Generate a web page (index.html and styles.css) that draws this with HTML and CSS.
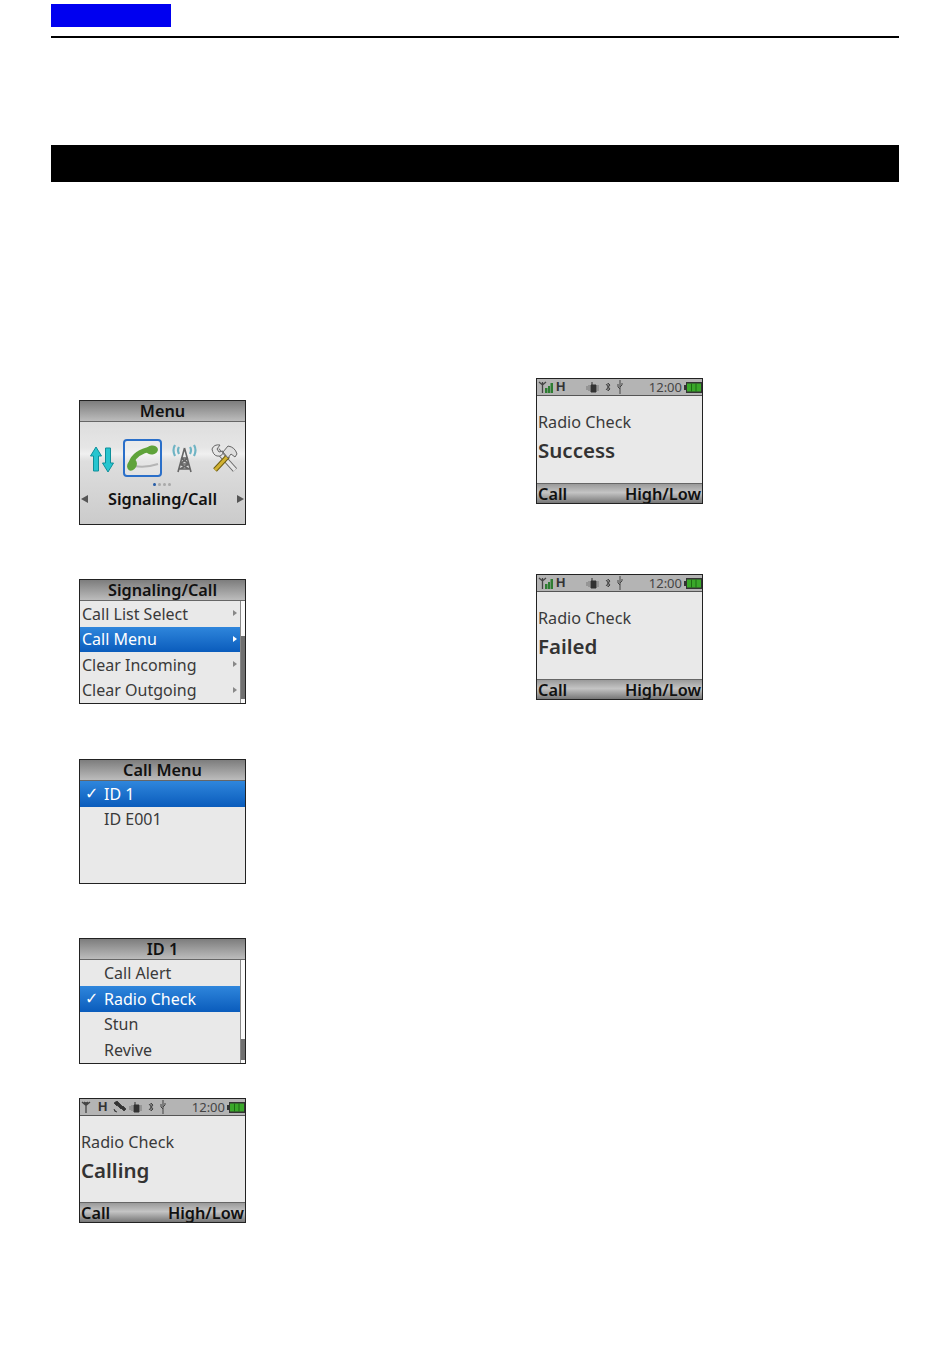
FILE: index.html
```html
<!DOCTYPE html>
<html>
<head>
<meta charset="UTF-8">
<title>Radio Check</title>
<link rel="stylesheet" href="styles.css">
</head>
<body>
<svg class="defs" width="0" height="0">
  <symbol id="ant" viewBox="0 0 10 12"><path d="M1 1l4 3.500 4-3.500M5 1v11M3 1l2 2 2-2" fill="none" stroke="#444" stroke-width="1.300"/></symbol>
  <symbol id="antbars" viewBox="0 0 15 12"><path d="M1 1l3.500 3 3.500-3M4.500 1v11" fill="none" stroke="#444" stroke-width="1.300"/><path d="M7 7h2.500v5H7zM10 5h2v7h-2zM12.500 2H15v10h-2.500z" fill="#2e7d32"/></symbol>
  <symbol id="sat" viewBox="0 0 13 12"><path d="M1 2l3-2 3 3-3 2zM5 5l2-2 3 3-2 2zM8 7l2-2 3 3-2 2zM1 8q0 3 3 3" fill="#333" stroke="#333" stroke-width=".8"/></symbol>
  <symbol id="vib" viewBox="0 0 14 12"><path d="M5 4h5v7H5zM6 1v3" fill="#333" stroke="#333"/><path d="M3 4v6M1 5v4M12 4v6" stroke="#777" fill="none"/></symbol>
  <symbol id="bt" viewBox="0 0 6 12"><path d="M1 3l4 5-2 2V2l2 2-4 5" fill="none" stroke="#444"/></symbol>
  <symbol id="usb" viewBox="0 0 6 14"><path d="M3 0v14M3 9L1 7V4M3 7l2-2V3" fill="none" stroke="#444"/></symbol>
  <symbol id="batt" viewBox="0 0 18 11"><path d="M2 0h16v11H2zM0 3h2v5H0z" fill="#333"/><path d="M3 1.500h14v8H3z" fill="#3aa82a"/><path d="M7.500 1.500v8M12 1.500v8" stroke="#1c6a14"/></symbol>
</svg>

<div class="page">
  <div class="tab"></div>
  <div class="rule"></div>
  <div class="band"></div>

  <div class="cols">
    <div class="col col-left">

      <div class="screen menu">
        <div class="title">Menu</div>
        <div class="icons">
          <svg class="ico ico-arrows" viewBox="0 0 24 27">
            <path d="M6 1l5.500 9H8.500v15h-5V10H.5z" fill="#27c5cf" stroke="#0e8f9a"/>
            <path d="M18 26l-5.500-9h3V2h5v15h3z" fill="#27c5cf" stroke="#0e8f9a"/>
          </svg>
          <div class="phone-box">
            <svg class="ico ico-phone" viewBox="0 0 33 30">
              <path d="M8 23q12 2 24-2" fill="none" stroke="#b5b5b5" stroke-width="2"/>
              <path d="M5 20Q9 9 25 6" fill="none" stroke="#5fa33a" stroke-width="5"/>
              <ellipse cx="6" cy="22" rx="4.500" ry="6" transform="rotate(30 6 22)" fill="#5fa33a"/>
              <ellipse cx="26" cy="7" rx="6" ry="4.500" transform="rotate(-10 26 7)" fill="#5fa33a"/>
            </svg>
          </div>
          <svg class="ico ico-tower" viewBox="0 0 27 32">
            <path d="M13.500 6L7 30M13.500 6L20 30M9 22h9M10 16h7M8 27h11M9 22l9 5M18 22l-9 5M10 16l8 6M17 16l-8 6" fill="none" stroke="#666" stroke-width="1.600"/>
            <path d="M4 3q-3 5 0 11M8 5q-2 3 0 7M23 3q3 5 0 11M19 5q2 3 0 7" fill="none" stroke="#6fb4c4" stroke-width="2.200"/>
          </svg>
          <svg class="ico ico-tools" viewBox="0 0 27 29">
            <path d="M6 6l18 20" stroke="#666" stroke-width="5.500" fill="none"/>
            <path d="M6 6l18 20" stroke="#e6e6e6" stroke-width="3.500" fill="none"/>
            <path d="M1 5q2-5 8-4L6 5l2 3 4-1q0 6-6 5Q2 11 1 5z" fill="#e6e6e6" stroke="#666"/>
            <path d="M4 26l13-14" stroke="#6d5c10" stroke-width="5" fill="none"/>
            <path d="M4 26l13-14" stroke="#d2b232" stroke-width="3" fill="none"/>
            <path d="M12 8l5-6q7 1 9 8l-2 3-4-3-3 4z" fill="#dedede" stroke="#666"/>
          </svg>
        </div>
        <div class="dots"><i class="on"></i><i></i><i></i><i></i></div>
        <div class="menu-label">
          <span class="tri-left"></span>
          <span>Signaling/Call</span>
          <span class="tri-right"></span>
        </div>
      </div>

      <div class="screen">
        <div class="title">Signaling/Call</div>
        <div class="body">
          <div class="rows">
            <div class="row">Call List Select<span class="more"></span></div>
            <div class="row sel">Call Menu<span class="more"></span></div>
            <div class="row">Clear Incoming<span class="more"></span></div>
            <div class="row">Clear Outgoing<span class="more"></span></div>
          </div>
          <div class="scroll"><div class="thumb thumb-a"></div></div>
        </div>
      </div>

      <div class="screen nudge">
        <div class="title">Call Menu</div>
        <div class="body">
          <div class="rows">
            <div class="row sel inset"><span class="check">✓</span>ID 1</div>
            <div class="row inset">ID E001</div>
          </div>
        </div>
      </div>

      <div class="screen tall">
        <div class="title">ID 1</div>
        <div class="body">
          <div class="rows">
            <div class="row inset">Call Alert</div>
            <div class="row sel inset"><span class="check">✓</span>Radio Check</div>
            <div class="row inset">Stun</div>
            <div class="row inset">Revive</div>
          </div>
          <div class="scroll"><div class="thumb thumb-b"></div></div>
        </div>
      </div>

      <div class="screen status-screen last">
        <div class="status">
          <svg class="s-ant"><use href="#ant"/></svg>
          <b class="s-h">H</b>
          <svg class="s-sat"><use href="#sat"/></svg>
          <svg class="s-vib"><use href="#vib"/></svg>
          <svg class="s-bt"><use href="#bt"/></svg>
          <svg class="s-usb"><use href="#usb"/></svg>
          <span class="time">12:00</span>
          <svg class="s-batt"><use href="#batt"/></svg>
        </div>
        <div class="msg">
          <div class="msg-small">Radio Check</div>
          <div class="msg-big">Calling</div>
        </div>
        <div class="soft"><span>Call</span><span>High/Low</span></div>
      </div>
    </div>

    <div class="col col-right">
      <div class="screen status-screen tall">
        <div class="status">
          <svg class="s-antbars"><use href="#antbars"/></svg>
          <b class="s-h h-bars">H</b>
          <svg class="s-vib vib-far"><use href="#vib"/></svg>
          <svg class="s-bt"><use href="#bt"/></svg>
          <svg class="s-usb"><use href="#usb"/></svg>
          <span class="time">12:00</span>
          <svg class="s-batt"><use href="#batt"/></svg>
        </div>
        <div class="msg">
          <div class="msg-small">Radio Check</div>
          <div class="msg-big">Success</div>
        </div>
        <div class="soft"><span>Call</span><span>High/Low</span></div>
      </div>

      <div class="screen status-screen tall">
        <div class="status">
          <svg class="s-antbars"><use href="#antbars"/></svg>
          <b class="s-h h-bars">H</b>
          <svg class="s-vib vib-far"><use href="#vib"/></svg>
          <svg class="s-bt"><use href="#bt"/></svg>
          <svg class="s-usb"><use href="#usb"/></svg>
          <span class="time">12:00</span>
          <svg class="s-batt"><use href="#batt"/></svg>
        </div>
        <div class="msg">
          <div class="msg-small">Radio Check</div>
          <div class="msg-big">Failed</div>
        </div>
        <div class="soft"><span>Call</span><span>High/Low</span></div>
      </div>
    </div>
  </div>
</div>
</body>
</html>
```

FILE: styles.css
```css
html, body { margin: 0; padding: 0; background: #fff; }
body { font-family: "Noto Sans", "Open Sans", sans-serif; color: #333; }
.defs { position: absolute; }
.page { width: 848px; margin-left: 51px; padding-top: 4px; }
.tab { width: 120px; height: 23px; background: #0000f0; }
.rule { height: 2px; margin-top: 9px; background: #000; }
.band { height: 37px; margin-top: 107px; background: #000; }

.cols { display: flex; margin-top: 196px; }
.col { display: flex; flex-direction: column; }
.col-left { width: 485px; padding: 22px 0 0 28px; box-sizing: border-box; gap: 54px; }
.col-right { gap: 70px; }
.nudge { margin-top: 1px; }
.last { margin-top: -20px; }

/* radio screens */
.screen { width: 165px; height: 123px; border: 1px solid #222; background: #e9e9e9; display: flex; flex-direction: column; overflow: hidden; font-size: 16px; }
.screen.tall { height: 124px; }
.title { height: 21px; line-height: 20px; flex: none; text-align: center; font-weight: 600; font-size: 16.300px; color: #111; background: linear-gradient(#7d7d7d, #bcbcbc); border-bottom: 1px solid #666; box-sizing: border-box; }

.body { flex: 1; display: flex; }
.rows { flex: 1; }
.row { height: 25.500px; line-height: 24px; padding-left: 2px; display: flex; align-items: center; position: relative; color: #3a3a3a; white-space: nowrap; }
.tall .row { height: 25.800px; }
.row.inset { padding-left: 24px; }
.row.sel { color: #fff; background: linear-gradient(#2f86dc, #0a5cbc); }
.check { position: absolute; left: 5px; font-family: "DejaVu Sans", sans-serif; font-size: 16px; font-weight: bold; }
.more { position: absolute; right: 3px; top: 9px; border-left: 4px solid #888; border-top: 3.500px solid transparent; border-bottom: 3.500px solid transparent; }
.row.sel .more { border-left-color: #fff; }

.scroll { width: 4px; background: #fafafa; border-left: 1px solid #888; display: flex; flex-direction: column; }
.thumb { width: 4px; background: #707070; }
.thumb-a { height: 63px; margin-top: 35px; }
.thumb-b { height: 21px; margin-top: 79px; }

/* main menu */
.menu { background: linear-gradient(#d6d6d6 0, #e6e6e6 38%, #f0f0f0 43%, #dedede 49%, #cbcbcb 100%); }
.icons { display: flex; align-items: center; height: 38px; margin-top: 17px; padding-left: 10px; }
.ico { flex: none; display: block; }
.ico-arrows { width: 24px; height: 27px; margin-top: 2px; }
.phone-box { width: 35px; height: 34px; margin-left: 9px; border: 2px solid #2a6fc9; border-radius: 4px; background: rgba(255,255,255,.25); display: flex; align-items: center; justify-content: center; flex: none; }
.ico-phone { width: 33px; height: 30px; }
.ico-tower { width: 27px; height: 32px; margin-left: 9px; }
.ico-tools { width: 27px; height: 29px; margin-left: 13px; }
.dots { display: flex; justify-content: center; gap: 2.500px; height: 3px; margin-top: 6px; padding-right: 1px; }
.dots i { width: 2.500px; height: 3px; border-radius: 50%; background: #aaa; }
.dots i.on { background: #2a5fa8; }
.menu-label { display: flex; justify-content: space-between; align-items: center; padding: 0 1px; margin-top: 1px; font-weight: 600; font-size: 16.300px; line-height: 24px; color: #111; }
.tri-left { border-right: 7px solid #555; border-top: 4px solid transparent; border-bottom: 4px solid transparent; }
.tri-right { border-left: 7px solid #555; border-top: 4px solid transparent; border-bottom: 4px solid transparent; }

/* status screens */
.status { height: 16px; flex: none; background: #b4b4b4; border-bottom: 1px solid #555; display: flex; align-items: center; padding-left: 1px; line-height: 14px; }
.status svg { flex: none; display: block; }
.s-ant { width: 10px; height: 12px; }
.s-antbars { width: 15px; height: 12px; }
.s-h { margin-left: 7px; font-size: 13px; font-family: "Liberation Sans", sans-serif; color: #333; }
.h-bars { margin-left: 3px; }
.s-sat { width: 13px; height: 12px; margin-left: 6px; }
.s-vib { width: 14px; height: 12px; margin-left: 3px; }
.vib-far { margin-left: 21px; }
.s-bt { width: 6px; height: 12px; margin-left: 5px; }
.s-usb { width: 6px; height: 14px; margin-left: 6px; }
.time { margin-left: auto; color: #444; font-size: 13px; }
.s-batt { width: 18px; height: 11px; margin-left: 2px; }

.msg { flex: 1; padding: 15px 0 0 1px; }
.msg-small { font-size: 16.200px; line-height: 22px; color: #3a3a3a; }
.msg-big { font-size: 20.500px; line-height: 30px; margin-top: 2px; font-weight: 600; color: #333; }
.soft { height: 20px; flex: none; display: flex; justify-content: space-between; padding: 0 1px; box-sizing: border-box; font-weight: 600; font-size: 16.300px; line-height: 20px; color: #111; background: linear-gradient(#9a9a9a, #c4c4c4 45%, #777); border-top: 1px solid #666; }
```
